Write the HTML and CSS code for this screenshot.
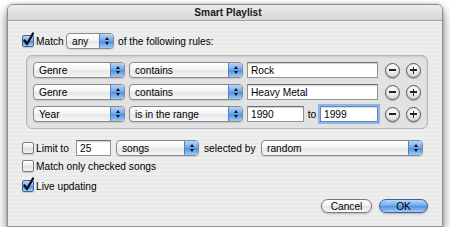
FILE: index.html
```html
<!DOCTYPE html>
<html lang="en">
<head>
  <meta charset="UTF-8">
  <meta name="viewport" content="width=device-width, initial-scale=1.0">
  <title>Smart Playlist</title>
  <link rel="stylesheet" href="styles.css">
</head>
<body>
  <div class="window">
    <div class="titlebar">Smart Playlist</div>
    <div class="content">
      <div class="line match-line">
        <span class="check on"><svg viewBox="0 0 12 12"><path d="M2.5 5.5 L5 9 L11 -1.5"/></svg></span>
        <span class="label match-label">Match</span>
        <span class="popup any"><span class="value">any</span><span class="cap"></span></span>
        <span class="label rules-label">of the following rules:</span>
      </div>

      <div class="rules">
        <div class="rule">
          <span class="popup field-popup"><span class="value">Genre</span><span class="cap"></span></span>
          <span class="popup op-popup"><span class="value">contains</span><span class="cap"></span></span>
          <span class="text wide">Rock</span>
          <span class="round minus"></span>
          <span class="round plus"></span>
        </div>
        <div class="rule">
          <span class="popup field-popup"><span class="value">Genre</span><span class="cap"></span></span>
          <span class="popup op-popup"><span class="value">contains</span><span class="cap"></span></span>
          <span class="text wide">Heavy Metal</span>
          <span class="round minus"></span>
          <span class="round plus"></span>
        </div>
        <div class="rule">
          <span class="popup field-popup"><span class="value">Year</span><span class="cap"></span></span>
          <span class="popup op-popup"><span class="value">is in the range</span><span class="cap"></span></span>
          <span class="text from">1990</span>
          <span class="to">to</span>
          <span class="text upto focused">1999</span>
          <span class="round minus"></span>
          <span class="round plus"></span>
        </div>
      </div>

      <div class="line limit-line">
        <span class="check"></span>
        <span class="label limit-label">Limit to</span>
        <span class="text count">25</span>
        <span class="popup unit-popup"><span class="value">songs</span><span class="cap"></span></span>
        <span class="label by-label">selected by</span>
        <span class="popup order-popup"><span class="value">random</span><span class="cap"></span></span>
      </div>

      <div class="line option-line">
        <span class="check"></span>
        <span class="label">Match only checked songs</span>
      </div>

      <div class="line option-line live-line">
        <span class="check on"><svg viewBox="0 0 12 12"><path d="M2.5 5.5 L5 9 L11 -1.5"/></svg></span>
        <span class="label">Live updating</span>
      </div>

      <div class="buttons">
        <span class="button cancel">Cancel</span>
        <span class="button ok">OK</span>
      </div>
    </div>
  </div>
</body>
</html>
```

FILE: styles.css
```css
body {
  margin: 0;
  background-color: #fff;
  font-family: "Liberation Sans", Arial, sans-serif;
  font-size: 10.2px;
  color: #000;
}

.window {
  width: 436px;
  height: 223px;
  margin: 4px 0 0 7px;
  box-sizing: border-box;
  border: 1px solid #8e8e8e;
  border-radius: 6px 6px 0 0;
  overflow: hidden;
  background: repeating-linear-gradient(#eeeeee 0 2px, #e9e9e9 2px 4px);
  box-shadow: 0 6px 12px rgba(0, 0, 0, 0.5), 0 0 3px rgba(0, 0, 0, 0.25);
}

.titlebar {
  height: 15px;
  line-height: 15px;
  text-align: center;
  font-weight: bold;
  color: #1a1a1a;
  padding-left: 6px;
  background: linear-gradient(#ededed, #d6d6d6);
  border-bottom: 1px solid #a4a4a4;
}

.content {
  display: flex;
  flex-direction: column;
  padding: 12px 14px 0 14px;
}

.line {
  display: flex;
  align-items: center;
  height: 16px;
}

.label {
  white-space: nowrap;
}

/* checkboxes */

.check {
  width: 12px;
  height: 12px;
  box-sizing: border-box;
  flex: none;
  border: 1px solid #7d7d7d;
  border-radius: 2px;
  background: linear-gradient(#ffffff, #e9e9e9 50%, #dcdcdc 51%, #f4f4f4);
  box-shadow: 0 1px 1px rgba(0, 0, 0, 0.15);
  margin-right: 2px;
}

.check.on {
  border-color: #3f63a0;
  background: linear-gradient(#bcd8f7, #6ea8ea 50%, #4b8fe2 51%, #a6cff6);
}

.check svg {
  display: block;
  width: 12px;
  height: 12px;
  margin: -1px 0 0 -1px;
  overflow: visible;
}

.check path {
  fill: none;
  stroke: #111;
  stroke-width: 2.4;
  stroke-linecap: round;
  stroke-linejoin: round;
}

/* pop-up buttons */

.popup {
  display: flex;
  align-items: stretch;
  height: 16px;
  box-sizing: border-box;
  flex: none;
  border: 1px solid #8a8a8a;
  border-radius: 4px;
  background: linear-gradient(#ffffff, #f3f3f3 50%, #e6e6e6 51%, #f7f7f7);
  box-shadow: 0 1px 1px rgba(0, 0, 0, 0.12);
  overflow: hidden;
}

.popup .value {
  flex: 1;
  display: flex;
  align-items: center;
  padding-left: 5px;
  white-space: nowrap;
}

.cap {
  width: 13px;
  display: flex;
  flex-direction: column;
  align-items: center;
  justify-content: center;
  gap: 2px;
  border-left: 1px solid #5a7fb8;
  background: linear-gradient(#b6d5f6, #6ba6ea 50%, #4a8ee2 51%, #9fcbf6);
}

.cap::before,
.cap::after {
  content: "";
  border-left: 2.5px solid transparent;
  border-right: 2.5px solid transparent;
}

.cap::before {
  border-bottom: 3px solid #111;
}

.cap::after {
  border-top: 3px solid #111;
}

/* text fields */

.text {
  display: flex;
  align-items: center;
  height: 16px;
  box-sizing: border-box;
  flex: none;
  padding-left: 3px;
  border: 1px solid #939393;
  border-top-color: #6c6c6c;
  background-color: #fff;
  box-shadow: inset 0 1px 1px rgba(0, 0, 0, 0.18);
  white-space: nowrap;
}

.text.focused {
  border-color: #5f88c4;
  box-shadow: 0 0 0 2px #8fb5e6, inset 0 1px 1px rgba(0, 0, 0, 0.15);
}

/* match line */

.match-label {
  width: 30px;
}

.any {
  width: 48px;
}

.rules-label {
  margin-left: 4px;
}

/* rules box */

.rules {
  display: flex;
  flex-direction: column;
  gap: 6px;
  margin: 6px 0 0 4px;
  padding: 6px;
  border: 1px solid #b4b4b4;
  border-radius: 6px;
  background-color: #e2e2e2;
  box-shadow: inset 0 1px 2px rgba(0, 0, 0, 0.12);
}

.rule {
  display: flex;
  align-items: center;
  height: 16px;
}

.field-popup {
  width: 92px;
}

.op-popup {
  width: 114px;
  margin-left: 4px;
}

.rule .text {
  margin-left: 4px;
}

.wide {
  width: 131px;
}

.rule .from {
  width: 57px;
}

.to {
  width: 16px;
  text-align: center;
}

.rule .upto {
  width: 58px;
  margin-left: 0;
}

.round {
  display: grid;
  place-items: center;
  width: 15px;
  height: 15px;
  box-sizing: border-box;
  flex: none;
  margin-left: 7px;
  border: 1.5px solid #5a5a5a;
  border-radius: 50%;
  background: radial-gradient(circle at 50% 30%, #ffffff, #e6e6e6 55%, #c4c4c4);
  box-shadow: 0 1px 1px rgba(0, 0, 0, 0.25);
}

.round.plus {
  margin-left: 6px;
}

.round::before,
.round::after {
  content: "";
  grid-area: 1 / 1;
  background-color: #222;
}

.round::before {
  width: 7px;
  height: 1.5px;
}

.round.plus::after {
  width: 1.5px;
  height: 7px;
}

/* limit line */

.limit-line {
  margin-top: 11px;
}

.limit-label {
  width: 40px;
}

.count {
  width: 35px;
}

.unit-popup {
  width: 83px;
  margin-left: 5px;
}

.by-label {
  width: 52px;
  margin-left: 5px;
}

.order-popup {
  width: 162px;
  margin-left: 5px;
}

.option-line {
  height: 14px;
  margin-top: 3px;
}

.live-line {
  margin-top: 6px;
}

/* buttons */

.buttons {
  display: flex;
  justify-content: flex-end;
  gap: 7px;
  margin-top: 6px;
}

.button {
  display: flex;
  align-items: center;
  justify-content: center;
  height: 14px;
  box-sizing: border-box;
  border-radius: 7px;
  box-shadow: 0 1px 2px rgba(0, 0, 0, 0.25);
}

.cancel {
  width: 51px;
  border: 1px solid #7a7a7a;
  background: linear-gradient(#ffffff, #f1f1f1 50%, #e2e2e2 51%, #f8f8f8);
}

.ok {
  width: 49px;
  border: 1px solid #3d5f9c;
  background: linear-gradient(#bad7f7, #6ba6ea 50%, #4a8ee2 51%, #a3cdf7);
}
```
